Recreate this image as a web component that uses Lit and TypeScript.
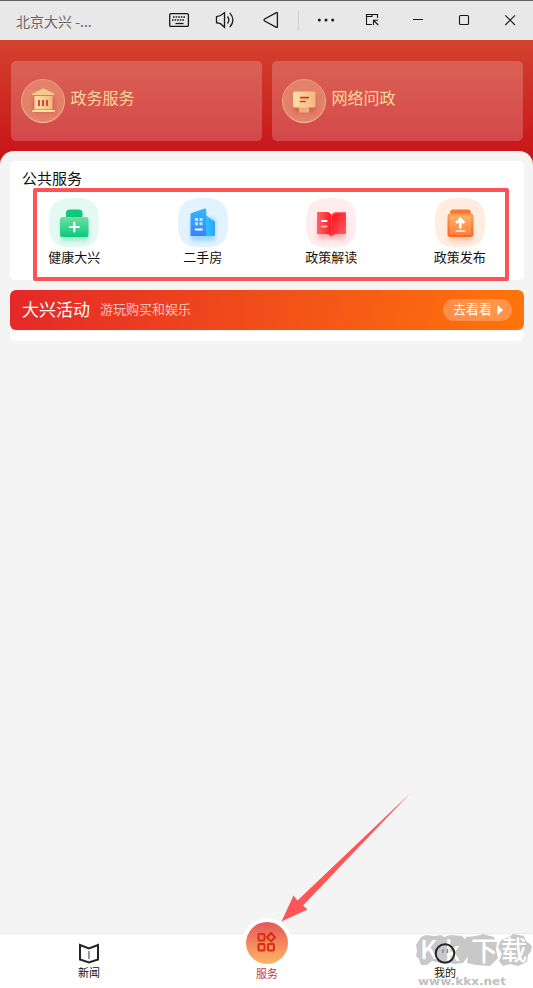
import { LitElement, html, css, svg } from "lit";
import { customElement } from "lit/decorators.js";

const windowIcons = {
  keyboard: svg`<rect x="169.700" y="13.700" width="18.700" height="12.700" rx="1.2"/><path d="M173 17h13M172 20h12.5" stroke-dasharray="1.6 1" stroke-width="1.5"/><path d="M175.5 23.5h8"/>`,
  volume: svg`<path d="M224.5 12.8v14.4l-4-3.5-4-1v-6l4-1.2zM227.500 16.5q2.7 3.5 0 7M229.800 12.8q6.2 7.2 0 14.4"/>`,
  back: svg`<path d="M277.4 13.3v13.4q0 1-1 .6l-11.8-6.3q-1.2-1 0-2l11.8-6.4q1-.4 1 .7z"/>`,
  more: svg`<g fill="#191919" stroke="none"><circle cx="319.3" cy="20" r="1.5"/><circle cx="326" cy="20" r="1.5"/><circle cx="332.700" cy="20" r="1.5"/></g>`,
  popout: svg`<path d="M372 24.500h-5.500v-10h11v3.500M366.500 16.500h5.500v-2M373.500 25v-4.700h4.500M373.700 20.500l4.500 4.500" stroke-width="1.100"/>`,
  minimize: svg`<path d="M413 19.500h10" stroke-width="1"/>`,
  maximize: svg`<rect x="459.500" y="15.500" width="9" height="9" rx="1" stroke-width="1.100"/>`,
  close: svg`<path d="M505.300 15.300l9.700 9.700M515 15.300l-9.700 9.700" stroke-width="1.100"/>`,
};

@customElement("app-root")
export class AppRoot extends LitElement {
  static styles = css`
    :host {
      display: flex;
      flex-direction: column;
      position: relative;
      width: 533px;
      height: 988px;
      overflow: hidden;
      background: #f4f4f4;
      color: #111;
      font-family: "Noto Sans CJK SC", sans-serif;
    }
    * { box-sizing: border-box; }
    svg { display: block; flex: none; }
    .titlebar {
      height: 40px;
      flex: none;
      display: flex;
      align-items: center;
      background: #e8e8e8;
      border-top: 1px solid #656367;
    }
    .title {
      width: 156px;
      padding-left: 16px;
      font-size: 14px;
      line-height: 20px;
      padding-top: 1px;
      color: #6a6866;
    }
    .tool { fill: none; stroke: #191919; stroke-width: 1.3; margin-top: -1px; }
    .divider { width: 1px; height: 20px; margin: 0 4px; background: #cfcfcf; }
    .hero {
      height: 125px;
      flex: none;
      padding: 21px 10px 0 11px;
      display: flex;
      gap: 10px;
      background: linear-gradient(#d5422e, #c8181b 108px);
    }
    .hero-card {
      flex: 1;
      height: 80px;
      padding-left: 10px;
      display: flex;
      border-radius: 5px;
      background: rgba(255, 255, 255, 0.2);
      color: #ffd798;
      font-size: 16px;
      line-height: 24px;
    }
    .hero-card svg { margin: 17px 4.5px 0 -1px; }
    .hero-card span { margin-top: 24px; }
    .sheet {
      flex: 1;
      margin-top: -14px;
      padding: 10px 9px 0 10px;
      border-radius: 14px 14px 0 0;
      background: #f4f4f4;
    }
    .panel { height: 119px; background: #fff; border-radius: 5px; }
    .heading { padding: 6px 12px 0; font-size: 15px; line-height: 22px; }
    .services { display: grid; grid-template-columns: repeat(4, 1fr); margin-top: 9px; }
    .service {
      display: flex;
      flex-direction: column;
      align-items: center;
      font-size: 13px;
      line-height: 20px;
    }
    .service span { margin-top: -1px; }
    .promo { margin-top: 10px; height: 51px; border-radius: 6px; background: linear-gradient(#f4f4f4 80%, #fff 80%); }
    .banner {
      height: 40px;
      padding: 0 12px;
      display: flex;
      align-items: center;
      border-radius: 6px;
      background: linear-gradient(100deg, #e42829, #ff750a);
      color: #fff;
      font-size: 17px;
    }
    .banner > span { margin-top: -3px; }
    .banner > .sub { margin-left: 10px; font-size: 13px; color: rgba(255, 255, 255, 0.7); }
    .go {
      margin-left: auto;
      width: 69px;
      height: 22px;
      padding: 0 9px 0 10px;
      display: flex;
      align-items: center;
      justify-content: space-between;
      border-radius: 11px;
      background: rgba(255, 255, 255, 0.25);
      font-size: 13px;
      line-height: 20px;
    }
    .go span { margin-top: -2px; }
    .nav {
      position: relative;
      height: 55px;
      flex: none;
      display: grid;
      grid-template-columns: 178px 178px 178px;
      background: #fff;
      border-top: 1px solid #ebebeb;
    }
    .tab {
      position: relative;
      display: flex;
      flex-direction: column;
      align-items: center;
      padding-top: 8px;
      font-size: 11px;
      line-height: 16px;
    }
    .tab svg { margin-bottom: -0.5px; }
    .tab.active { color: #cf3236; padding-top: 0; }
    .tab.active svg { margin: -16px 0 -3px; }
    .mark { position: absolute; left: 414px; top: -1px; }
    .frame {
      position: absolute;
      left: 33px;
      top: 188px;
      width: 476px;
      height: 93px;
      border: 4px solid #fc5356;
      border-radius: 2px;
    }
    .pointer { position: absolute; left: 278px; top: 790px; }
  `;

  private serviceIcon(kind: string) {
    const tints: Record<string, string> = { health: "#e3f9f1", house: "#e2f3ff", book: "#ffeced", publish: "#ffede2" };
    const art: Record<string, unknown> = {
      health: svg`
        <defs><linearGradient id="bag" x2="0" y2="1"><stop stop-color="#70dfa0"/><stop offset="1" stop-color="#08ca7d"/></linearGradient></defs>
        <rect x="12" y="23" width="27" height="20" rx="3" fill="#43d599" opacity=".4" filter="url(#blur-health)"/>
        <path d="M17 20v-5q0-3.500 3.500-3.500h9q4 0 4 3.500v5z" fill="#10c77c"/>
        <rect x="11" y="19" width="28.500" height="20" rx="2.500" fill="url(#bag)"/>
        <path d="M25.300 24.500v9M20.800 29h9" stroke="#fff" stroke-width="2.200" stroke-linecap="round"/>`,
      house: svg`
        <defs><linearGradient id="tower" x2="0" y2="1"><stop stop-color="#31b9fc"/><stop offset="1" stop-color="#407fff"/></linearGradient>
        <linearGradient id="annex"><stop stop-color="#26c9ff"/><stop offset="1" stop-color="#389eff"/></linearGradient></defs>
        <path d="M13 20h24v23H13z" fill="#48b7ff" opacity=".45" filter="url(#blur-house)"/>
        <path d="M28 17.500l9 6V38h-9z" fill="url(#annex)"/><path d="M12.500 15.500l14-5q1.800-.5 1.800 1.500v26H12.500z" fill="url(#tower)"/>
        <path d="M17 20h3v3h-3zM21.500 20h3v3h-3zM17 24.200h3v3h-3zM21.500 24.200h3v3h-3z" fill="#b9e8ff"/><path d="M17.800 31.500h6" stroke="#fff" stroke-width="2.200" stroke-linecap="round"/>`,
      book: svg`
        <defs><linearGradient id="leaf"><stop stop-color="#ff646b"/><stop offset="1" stop-color="#ff1922"/></linearGradient>
        <linearGradient id="page" y2="1"><stop stop-color="#ff0d18"/><stop offset="1" stop-color="#ff6267"/></linearGradient></defs>
        <path d="M12 22h27v19H12z" fill="#ff5661" opacity=".4" filter="url(#blur-book)"/>
        <path d="M11 14h9q5 0 5.500 4v21q-1.500-3-5.500-3h-9z" fill="url(#leaf)"/>
        <path d="M40 14h-8.500q-5.500 0-6 4v21q1.500-3 6-3H40z" fill="url(#page)"/><path d="M40 14.500h-8q-5 0-6 4" fill="none" stroke="#ff8287" stroke-width=".8"/>
        <path d="M16 23h4.500" stroke="#fff" stroke-width="2" stroke-linecap="round"/><path d="M16 28.500h4.500" stroke="#ffb4b7" stroke-width="2" stroke-linecap="round"/>`,
      publish: svg`
        <defs><linearGradient id="box" x2="0" y2="1"><stop stop-color="#ff9d50"/><stop offset="1" stop-color="#ff6625"/></linearGradient>
        <linearGradient id="face" x2="0" y2="1"><stop stop-color="#ffb367"/><stop offset="1" stop-color="#ff8040"/></linearGradient></defs>
        <rect x="14" y="23" width="23" height="20" fill="#ff8b49" opacity=".4" filter="url(#blur-publish)"/>
        <path d="M15 15q0-3.500 3-3.500h15q3 0 3 3.500v3H15z" fill="#ff742f"/>
        <rect x="12.500" y="15.500" width="26" height="23.500" rx="3" fill="url(#box)"/><rect x="15" y="17.500" width="21" height="19.500" rx="1.500" fill="url(#face)"/>
        <path d="M25.300 30.500v-8M21.300 25l4-4 4 4" fill="none" stroke="#fff" stroke-width="2.700"/><path d="M21.500 33h8" stroke="#ffd6ba" stroke-width="1.800" stroke-linecap="round"/>`,
    };
    return html`<svg width="50" height="50" viewBox="0 0 50 50">
      <defs><filter id="blur-${kind}" x="-30%" y="-30%" width="160%" height="160%"><feGaussianBlur stdDeviation="2"/></filter></defs>
      <path d="M25 0C44 0 50 6 50 25S44 49.500 25 49.500 0 44 0 25 6 0 25 0z" fill=${tints[kind]}/>
      ${art[kind]}
    </svg>`;
  }

  private heroIcon(body: unknown) {
    return html`<svg width="46" height="46" viewBox="0 0 46 46">
      <defs>
        <linearGradient id="gold"><stop stop-color="#ffe3a2"/><stop offset="1" stop-color="#f6b57f"/></linearGradient>
        <linearGradient id="rim" x2="0" y2="1"><stop stop-color="#ec9b7d"/><stop offset=".5" stop-color="#eda681"/><stop offset="1" stop-color="#ffd09b"/></linearGradient>
        <filter id="soft" x="-30%" y="-30%" width="160%" height="160%"><feGaussianBlur stdDeviation="2"/></filter>
      </defs>
      <circle cx="23" cy="23" r="21.500" fill="#e2826b" stroke="url(#rim)"/>
      ${body}
    </svg>`;
  }

  render() {
    const tool = (icon: unknown, cx: number) =>
      html`<svg class="tool" width="46" height="38" viewBox="${cx - 23} 1 46 38">${icon}</svg>`;
    const services = [
      ["health", "健康大兴"],
      ["house", "二手房"],
      ["book", "政策解读"],
      ["publish", "政策发布"],
    ];
    return html`
      <header class="titlebar">
        <div class="title">北京大兴 -...</div>
        ${tool(windowIcons.keyboard, 179)}${tool(windowIcons.volume, 225)}${tool(windowIcons.back, 271)}
        <div class="divider"></div>
        ${tool(windowIcons.more, 326)}${tool(windowIcons.popout, 372)}${tool(windowIcons.minimize, 418)}
        ${tool(windowIcons.maximize, 464)}${tool(windowIcons.close, 510)}
      </header>
      <section class="hero">
        <div class="hero-card">
          ${this.heroIcon(svg`<path d="M13 19h22v16H13z" fill="#d4473e" opacity=".55" filter="url(#soft)"/>
            <path d="M12 15.800l10.300-5q1-.4 2 0l10.200 5v1.200H12z" fill="#f8c98e"/><path d="M14.500 18h18v13.500h-18z" fill="url(#gold)"/><rect x="12" y="32" width="23" height="2" rx="1" fill="#ffe0a0"/>
            <path d="M19 22v6M23 22v6M27 22v6" stroke="#cf3f32" stroke-width="1.800"/>`)}
          <span>政务服务</span>
        </div>
        <div class="hero-card">
          ${this.heroIcon(svg`<path d="M13 18h22v17H13z" fill="#d4473e" opacity=".55" filter="url(#soft)"/>
            <path d="M18 29h10v5.500H18z" fill="#eeae7b"/><rect x="12" y="13.500" width="22.500" height="16" rx="2" fill="url(#gold)"/>
            <path d="M19 19.700h9M18.800 23.500h6" stroke="#d2382f" stroke-width="1.700"/>`)}
          <span>网络问政</span>
        </div>
      </section>
      <main class="sheet">
        <section class="panel">
          <div class="heading">公共服务</div>
          <div class="services">
            ${services.map(([kind, label]) => html`<div class="service">${this.serviceIcon(kind)}<span>${label}</span></div>`)}
          </div>
        </section>
        <section class="promo">
          <div class="banner">
            <span>大兴活动</span><span class="sub">游玩购买和娱乐</span>
            <div class="go"><span>去看看</span><svg width="6" height="10" viewBox="0 0 6 10"><path d="M.5 0L6 5 .5 10z" fill="#fff"/></svg></div>
          </div>
        </section>
      </main>
      <nav class="nav">
        <svg class="mark" width="119" height="54" viewBox="414 934 119 54">
          <g fill="#c8c8c8">
            <path d="M421 938l5-2 9 1 6-1 3 2 6-2 12 1 5 5-1 8 3 6-6 8-9 1-7-2-7 1-8-2-5 4h-6l-2-6-3-3 1-5-1-6z"/>
            <path d="M466 938l10-1 7-2 11 3 3 5-1 8 2 8-8 8-14-1-9-2 1-8-4-8z"/>
            <path d="M501 941l8-3 4-3 11 2 2 5 6 5-1 5-3 4-1 7-9 4-8-2-7 2-4-5 3-7-4-7z"/>
          </g>
          <g fill="#fff" font-family="Noto Sans CJK SC, sans-serif" font-weight="500">
            <text x="420" y="960" font-size="26">K</text>
            <text x="445" y="962" font-size="26">k</text>
            <text x="471" y="962" font-size="27">下</text>
            <text x="501" y="961" font-size="26">载</text>
          </g>
          <text x="418" y="985.500" fill="#c0c0c0" font-family="DejaVu Sans, sans-serif" font-size="11" font-weight="700" textLength="88" lengthAdjust="spacingAndGlyphs">www.kkx.net</text>
        </svg>
        <div class="tab">
          <svg width="22" height="22" viewBox="78 942 22 22" fill="none">
            <path d="M80 945l9 3.500 9-3.500v14.500l-9 3-9-3z" stroke="#252529" stroke-width="2"/><path d="M89 951v8" stroke="#777" stroke-width="1.500"/>
          </svg>
          <span>新闻</span>
        </div>
        <div class="tab active">
          <svg width="50" height="50" viewBox="0 0 50 50" fill="none">
            <defs><linearGradient id="ember" x2="0" y2="1"><stop stop-color="#e45859"/><stop offset="1" stop-color="#ffb565"/></linearGradient></defs>
            <circle cx="25" cy="25" r="25" fill="#fff"/><circle cx="25" cy="25" r="21" fill="url(#ember)"/>
            <g stroke="#dc2b12" stroke-width="2"><rect x="16.500" y="16" width="6" height="6.500" rx="1"/><path d="M29 15l4 4.200-4 4.200-4-4.200z" stroke-linejoin="round"/><rect x="16.500" y="26" width="6" height="6.500" rx="1"/><rect x="26" y="26" width="6" height="6.500" rx="1"/></g>
          </svg>
          <span>服务</span>
        </div>
        <div class="tab">
          <svg width="22" height="22" viewBox="434 942 22 22" fill="none">
            <circle cx="445" cy="953.500" r="9.300" stroke="#252529" stroke-width="2"/><path d="M443 949v4M447.500 949v4" stroke="#888" stroke-width="1.500"/>
          </svg>
          <span>我的</span>
        </div>
      </nav>
      <div class="frame"></div>
      <svg class="pointer" width="136" height="134" viewBox="278 790 136 134">
        <path d="M410.500 793L303 905.500l4.500 4-26 12 12-26 4 5z" fill="#fd5658"/>
      </svg>
    `;
  }
}
